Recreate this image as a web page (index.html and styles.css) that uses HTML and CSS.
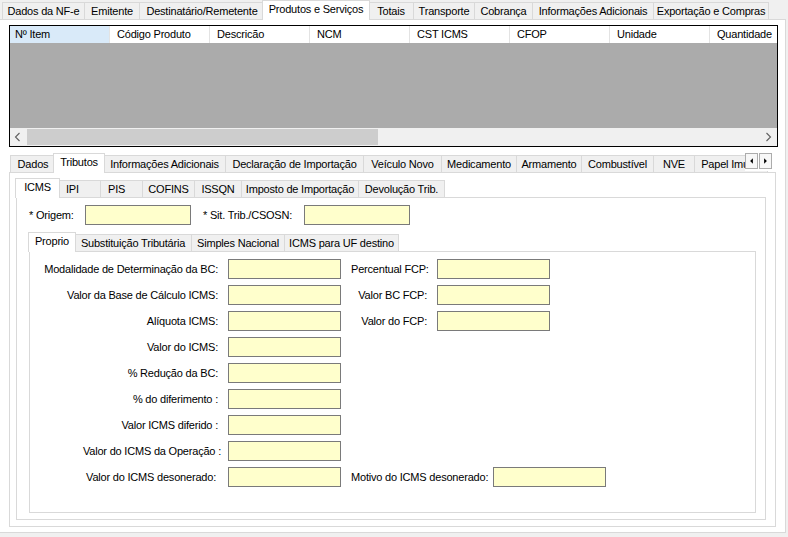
FILE: index.html
```html
<!DOCTYPE html>
<html lang="pt-BR">
<head>
<meta charset="utf-8">
<title>NF-e - Produtos e Serviços</title>
<link rel="stylesheet" href="styles.css">
</head>
<body>
<div class="tabctl outer">
  <div class="strip">
    <div class="tab w82">Dados da NF-e</div>
    <div class="tab w55">Emitente</div>
    <div class="tab w125">Destinatário/Remetente</div>
    <div class="tab sel w108">Produtos e Serviços</div>
    <div class="tab w45">Totais</div>
    <div class="tab w61">Transporte</div>
    <div class="tab w58">Cobrança</div>
    <div class="tab w121">Informações Adicionais</div>
    <div class="tab w116 end">Exportação e Compras</div>
  </div>
  <div class="panel outer-panel">
    <div class="grid">
      <div class="grid-head">
        <div class="col cur">Nº Item</div>
        <div class="col">Código Produto</div>
        <div class="col">Descricão</div>
        <div class="col">NCM</div>
        <div class="col">CST ICMS</div>
        <div class="col">CFOP</div>
        <div class="col">Unidade</div>
        <div class="col last">Quantidade</div>
      </div>
      <div class="grid-body"></div>
      <div class="hscroll">
        <div class="sb-btn"><svg width="17" height="18" viewBox="0 0 17 18"><polyline points="9.5,5 5.5,9 9.5,13" fill="none" stroke="#606060" stroke-width="1.1"/></svg></div>
        <div class="sb-track"><div class="sb-thumb"></div></div>
        <div class="sb-btn"><svg width="17" height="18" viewBox="0 0 17 18"><polyline points="6.5,5 10.5,9 6.5,13" fill="none" stroke="#606060" stroke-width="1.1"/></svg></div>
      </div>
    </div>

    <div class="tabctl trib">
      <div class="strip white">
        <div class="tab w45">Dados</div>
        <div class="tab sel w52">Tributos</div>
        <div class="tab w122">Informações Adicionais</div>
        <div class="tab w138">Declaração de Importação</div>
        <div class="tab w78">Veículo Novo</div>
        <div class="tab w75">Medicamento</div>
        <div class="tab w65">Armamento</div>
        <div class="tab w72">Combustível</div>
        <div class="tab w41">NVE</div>
        <div class="tab w74 end">Papel Imune</div>
      </div>
      <div class="tab-arrows">
        <span class="arr"><svg width="12" height="14" viewBox="0 0 12 14"><polygon points="7.5,4 4.5,7 7.5,10" fill="#000"/></svg></span>
        <span class="arr"><svg width="12" height="14" viewBox="0 0 12 14"><polygon points="4.5,4 7.5,7 4.5,10" fill="#000"/></svg></span>
      </div>
      <div class="panel trib-panel">

        <div class="tabctl icms">
          <div class="strip white">
            <div class="tab sel w45">ICMS</div>
            <div class="tab w42 lft">IPI</div>
            <div class="tab w42 lft">PIS</div>
            <div class="tab w52">COFINS</div>
            <div class="tab w47">ISSQN</div>
            <div class="tab w117">Imposto de Importação</div>
            <div class="tab w87 end">Devolução Trib.</div>
          </div>
          <div class="panel icms-panel">
            <div class="origem">
              <span class="lbl lbl-origem">* Origem:</span>
              <span class="input w106"></span>
              <span class="lbl lbl-sit">* Sit. Trib./CSOSN:</span>
              <span class="input w106"></span>
            </div>

            <div class="tabctl proprio">
              <div class="strip white">
                <div class="tab sel w48">Proprio</div>
                <div class="tab w117">Substituição Tributária</div>
                <div class="tab w93">Simples Nacional</div>
                <div class="tab w115 end">ICMS para UF destino</div>
              </div>
              <div class="panel proprio-panel">
                <div class="form">
                  <span class="lbl r c1">Modalidade de Determinação da BC:</span>
                  <span class="input c2"></span>
                  <span class="lbl r c3">Percentual FCP:</span>
                  <span class="input c4"></span>

                  <span class="lbl r c1">Valor da Base de Cálculo ICMS:</span>
                  <span class="input c2"></span>
                  <span class="lbl r c3">Valor BC FCP:</span>
                  <span class="input c4"></span>

                  <span class="lbl r c1">Alíquota ICMS:</span>
                  <span class="input c2"></span>
                  <span class="lbl r c3">Valor do FCP:</span>
                  <span class="input c4"></span>

                  <span class="lbl r c1">Valor do ICMS:</span>
                  <span class="input c2"></span>

                  <span class="lbl r c1">% Redução da BC:</span>
                  <span class="input c2"></span>

                  <span class="lbl r c1">% do diferimento :</span>
                  <span class="input c2"></span>

                  <span class="lbl r c1">Valor ICMS diferido :</span>
                  <span class="input c2"></span>

                  <span class="lbl r c1 wide">Valor do ICMS da Operação :</span>
                  <span class="input c2"></span>

                  <span class="lbl r c1 short">Valor do ICMS desonerado:</span>
                  <span class="input c2"></span>
                  <span class="motivo">
                    <span class="lbl lbl-motivo">Motivo do ICMS desonerado:</span>
                    <span class="input w113"></span>
                  </span>
                </div>
              </div>
            </div>

          </div>
        </div>

      </div>
    </div>
  </div>
</div>
</body>
</html>
```

FILE: styles.css
```css
* { box-sizing: border-box; }
html, body { margin: 0; padding: 0; }
body {
  width: 788px;
  height: 537px;
  overflow: hidden;
  background: #f0f0f0;
  font-family: "Liberation Sans", Arial, sans-serif;
  font-size: 11px;
  letter-spacing: -0.2px;
  color: #000;
}

/* ---------- tab controls ---------- */
.tabctl { position: relative; }
.strip {
  display: flex;
  align-items: flex-end;
  height: 19px;
  padding-left: 2px;
  position: relative;
  z-index: 1;
}
.tab {
  flex: none;
  height: 17px;
  line-height: 16px;
  text-align: center;
  white-space: nowrap;
  overflow: hidden;
  background: #f0f0f0;
  border-top: 1px solid #d9d9d9;
  border-left: 1px solid #d9d9d9;
}
.tab.end { border-right: 1px solid #d9d9d9; }
.tab.lft { text-align: left; padding-left: 7px; }
.tab.sel {
  height: 20px;
  line-height: 17px;
  margin: 0 -2px -1px -2px;
  background: #fff;
  border-right: 1px solid #d9d9d9;
  position: relative;
  z-index: 2;
}
.panel {
  background: #fff;
  border: 1px solid #d9d9d9;
}

.w41 { width: 41px; } .w42 { width: 42px; } .w45 { width: 45px; }
.w47 { width: 47px; } .w48 { width: 48px; } .w52 { width: 52px; }
.w55 { width: 55px; } .w58 { width: 58px; } .w61 { width: 61px; }
.w65 { width: 65px; } .w72 { width: 72px; } .w74 { width: 74px; }
.w75 { width: 75px; } .w78 { width: 78px; } .w82 { width: 82px; }
.w87 { width: 87px; } .w93 { width: 93px; } .w106 { width: 106px; }
.w108 { width: 108px; } .w113 { width: 113px; } .w115 { width: 115px; }
.w116 { width: 116px; } .w117 { width: 117px; } .w121 { width: 121px; }
.w122 { width: 122px; } .w125 { width: 125px; } .w138 { width: 138px; }

/* outer */
.outer { width: 786px; }
.outer-panel {
  height: 514px;
  padding: 5px 0 0 9px;
  border-left: none;
}

/* ---------- data grid ---------- */
.grid {
  width: 769px;
  height: 122px;
  border: 1px solid #000;
  background: #ababab;
  display: flex;
  flex-direction: column;
}
.grid-head {
  display: flex;
  height: 17px;
  background: #fff;
  flex: none;
}
.col {
  flex: none;
  width: 100px;
  height: 17px;
  line-height: 16px;
  padding-left: 7px;
  border-right: 1px solid #e3e3e3;
  white-space: nowrap;
  overflow: hidden;
}
.col.cur { background: #d9eaf9; padding-left: 5px; }
.col.last { width: 67px; border-right: none; }
.grid-body { flex: 1; }
.hscroll {
  flex: none;
  height: 18px;
  display: flex;
  background: #f0f0f0;
}
.sb-btn { width: 17px; height: 18px; flex: none; }
.sb-btn svg { display: block; }
.sb-track { flex: 1; padding-top: 1px; }
.sb-thumb { width: 351px; height: 16px; background: #cdcdcd; }

/* ---------- tributos ---------- */
.trib { width: 767px; margin-top: 6px; }
.trib .strip { padding-left: 1px; }
.white { background: #fff; }
.tab-arrows {
  position: absolute;
  top: 0;
  right: 3px;
  width: 28px;
  height: 18px;
  background: #fff;
  z-index: 3;
  display: flex;
  gap: 1px;
}
.arr {
  width: 13px;
  height: 16px;
  border: 1px solid #acacac;
  background: #f7f7f7;
  display: flex;
  align-items: center;
  justify-content: center;
}
.arr svg { display: block; }
.trib-panel { height: 355px; padding: 5px 0 0 6px; }

/* ---------- ICMS ---------- */
.icms { width: 750px; }
.icms-panel { height: 323px; padding: 7px 0 0 12px; }

.origem {
  display: flex;
  align-items: center;
  height: 20px;
}
.lbl { white-space: nowrap; }
.lbl-origem { width: 56px; }
.lbl-sit { width: 101px; margin-left: 12px; }
.input {
  display: block;
  flex: none;
  height: 20px;
  background: #ffffcc;
  border: 1px solid #7a7a7a;
}

/* ---------- Proprio ---------- */
.proprio { width: 727px; margin-top: 7px; }
.proprio-panel { height: 262px; padding-top: 7px; }

.form {
  display: grid;
  grid-template-columns: 188px 113px 76px 113px;
  grid-auto-rows: 20px;
  column-gap: 10px;
  row-gap: 6px;
  align-items: center;
}
.r { text-align: right; }
.c1 { grid-column: 1; }
.c2 { grid-column: 2; }
.c3 { grid-column: 3; }
.c4 { grid-column: 4; }
.wide { margin-right: -3px; }
.short { margin-right: 2px; }
.motivo {
  grid-column: 3 / span 2;
  display: flex;
  align-items: center;
  width: 255px;
}
.lbl-motivo { flex: none; width: 142px; }
.motivo .input { width: 113px; }
```
